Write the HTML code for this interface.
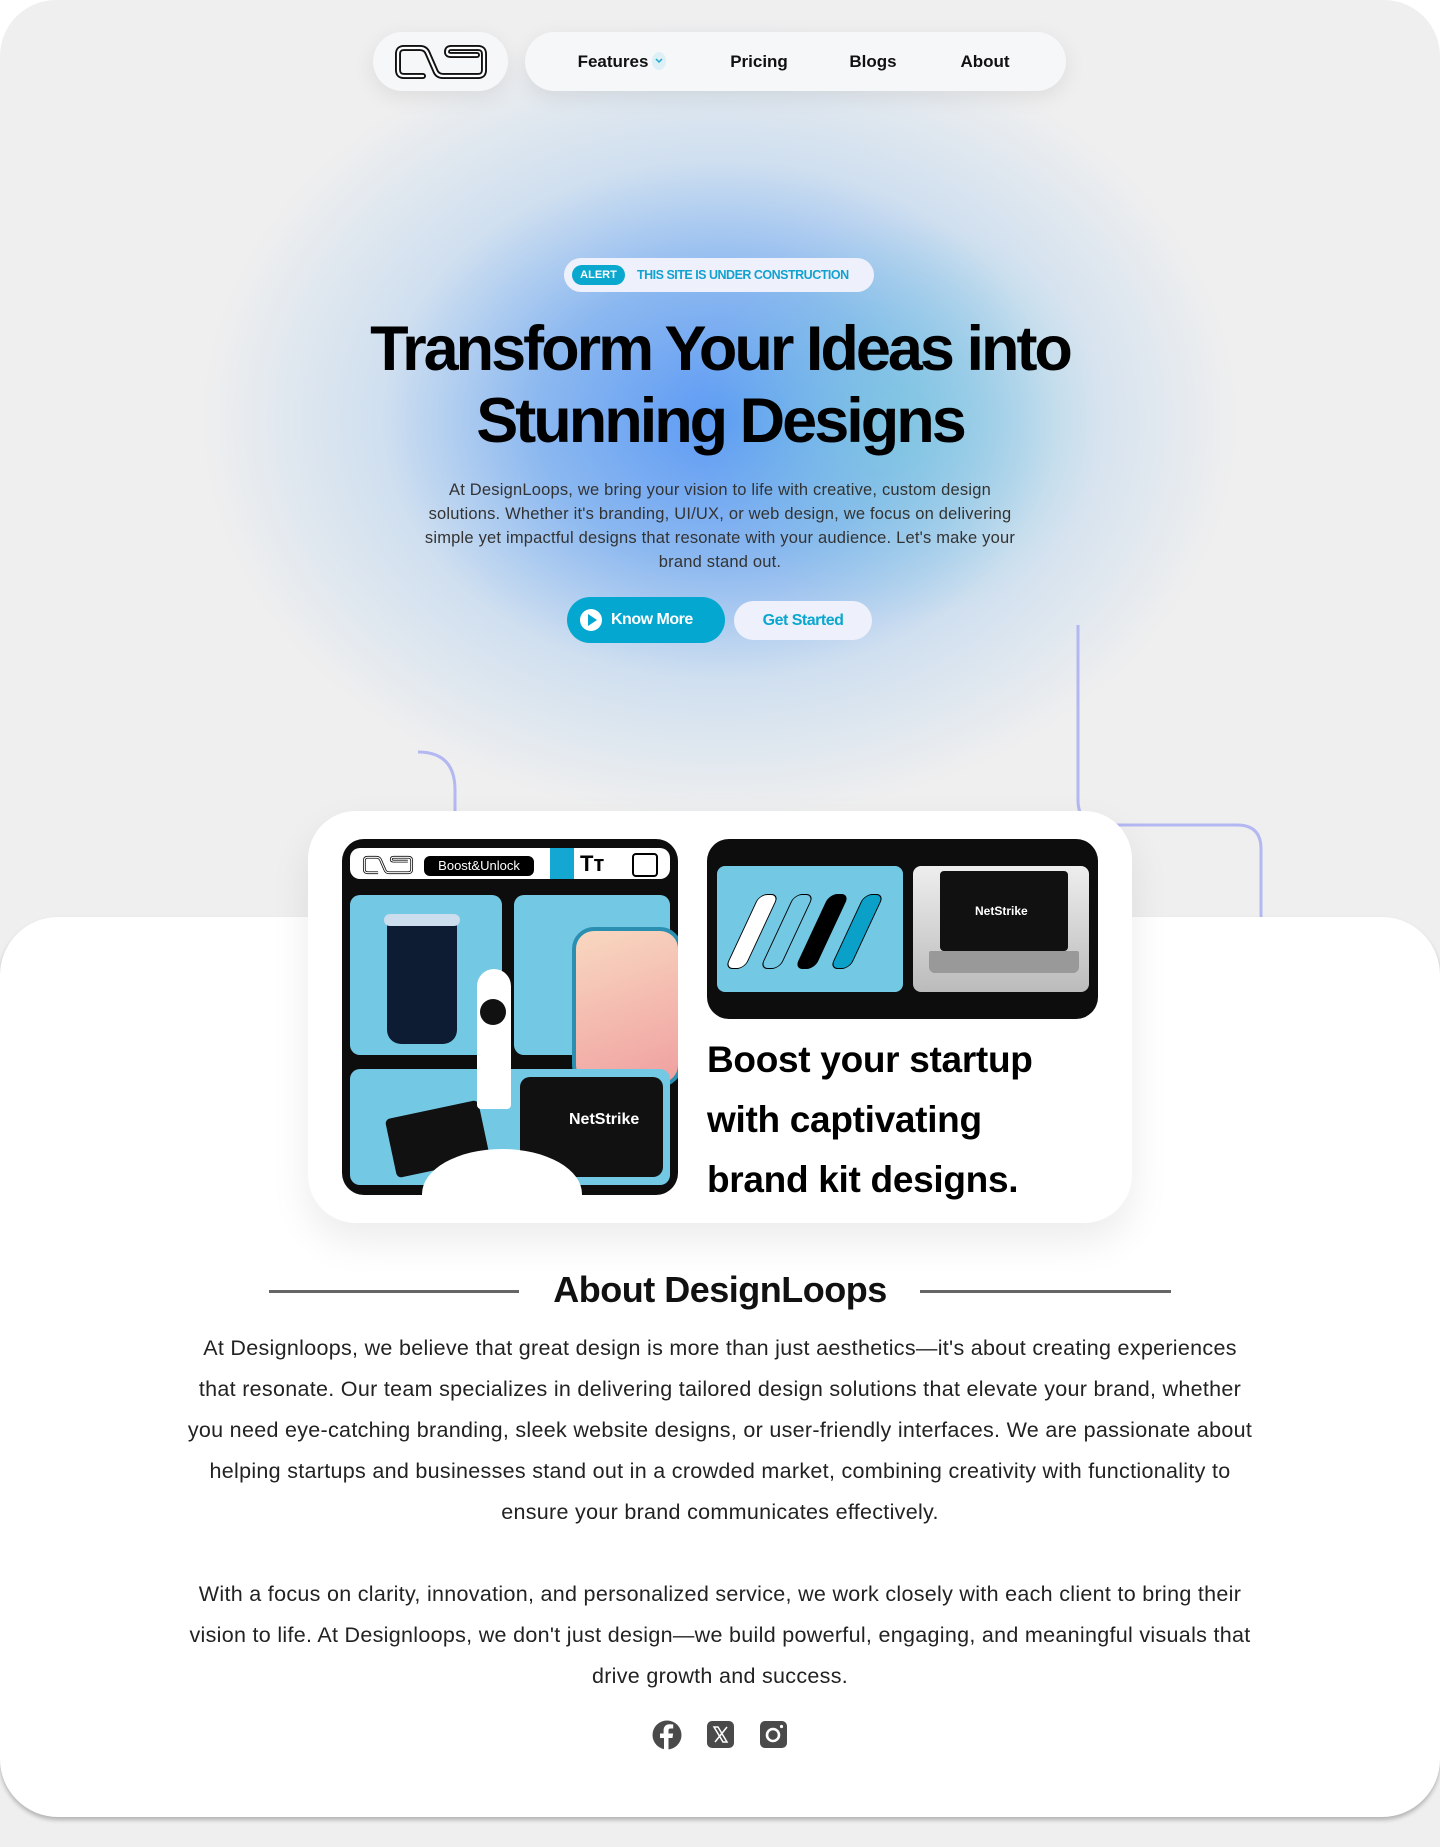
<!DOCTYPE html>
<html><head><meta charset="utf-8">
<style>
*{box-sizing:border-box;margin:0;padding:0}
html,body{width:1440px;height:1847px;overflow:hidden;background:#fff;font-family:"Liberation Sans",sans-serif}
.bgtop{position:absolute;left:0;top:0;width:1440px;height:1847px;background:#efefef;border-radius:56px 56px 0 0;overflow:hidden}
.glow{position:absolute;left:200px;top:20px;width:1040px;height:800px;
background:radial-gradient(closest-side,rgba(85,150,245,.95) 0%,rgba(105,165,240,.75) 35%,rgba(160,200,240,.4) 65%,rgba(239,239,239,0) 100%);}
.glow2{position:absolute;left:700px;top:220px;width:400px;height:400px;
background:radial-gradient(closest-side,rgba(120,210,215,.55) 0%,rgba(120,210,215,0) 100%)}
.white{position:absolute;left:0;top:917px;width:1440px;height:900px;background:#fff;border-radius:58px;box-shadow:0 3px 4px rgba(0,0,0,.25)}
.pill{position:absolute;background:#f6f7f9;border-radius:30px;box-shadow:0 6px 22px rgba(0,0,0,.08)}
.nav a{position:absolute;top:52px;font-size:17px;font-weight:bold;color:#111;text-decoration:none;transform:translateX(-50%)}
.h1{position:absolute;left:0;width:1440px;text-align:center;font-size:63px;font-weight:bold;letter-spacing:-3px;color:#000;line-height:72px}
.p{position:absolute;left:412px;width:616px;top:478px;text-align:center;font-size:16.5px;line-height:24px;color:#333;letter-spacing:.2px}
.btn{position:absolute;border-radius:24px;font-weight:bold;font-size:16px;letter-spacing:-.5px}
.card{position:absolute;left:308px;top:811px;width:824px;height:412px;background:#fff;border-radius:48px;box-shadow:0 18px 40px rgba(0,0,0,.08)}
.about p{position:absolute;left:185px;width:1070px;text-align:center;font-size:21.5px;line-height:41px;color:#222;letter-spacing:.3px}
</style></head><body>
<div class="bgtop">
 <div class="glow"></div><div class="glow2"></div>
 <svg width="1440" height="930" style="position:absolute;left:0;top:0" fill="none" stroke="#b3b8f2" stroke-width="3">
  <path d="M1078 625 V800 Q1078 825 1103 825 H1237 Q1261 825 1261 849 V917"/>
  <path d="M418 752 Q455 752 455 790 V812" />
 </svg>
</div>
<div class="white"></div>

<div class="pill" style="left:373px;top:32px;width:135px;height:59px"></div>
<svg style="position:absolute;left:393px;top:42px" width="96" height="40" viewBox="0 0 96 40" fill="none" stroke-linejoin="round" stroke-linecap="round">
 <g stroke="#111" stroke-width="6">
  <path d="M30 34 H11 Q5 34 5 28 V12 Q5 6 11 6 H27 Q33 6 35 12 L42 28 Q44 34 50 34 H85 Q91 34 91 28 V12 Q91 6 85 6 H58 Q54 6 54 10 Q54 13 58 13 H84"/>
 </g>
 <g stroke="#fff" stroke-width="2.2">
  <path d="M30 34 H11 Q5 34 5 28 V12 Q5 6 11 6 H27 Q33 6 35 12 L42 28 Q44 34 50 34 H85 Q91 34 91 28 V12 Q91 6 85 6 H58 Q54 6 54 10 Q54 13 58 13 H84"/>
 </g>
</svg>
<div class="pill nav" style="left:525px;top:32px;width:541px;height:59px"></div>
<div class="nav">
 <a style="left:613px">Features</a>
 <a style="left:759px">Pricing</a>
 <a style="left:873px">Blogs</a>
 <a style="left:985px">About</a>
</div>
<div style="position:absolute;left:652px;top:52px;width:14px;height:18px;border-radius:50%;background:#dcf0f6"></div>
<svg style="position:absolute;left:654px;top:57px" width="10" height="8" viewBox="0 0 10 8"><path d="M2 2 L5 5 L8 2" fill="none" stroke="#1ea7cf" stroke-width="1.5"/></svg>

<div style="position:absolute;left:564px;top:258px;width:310px;height:34px;border-radius:17px;background:#eef1fb"></div>
<div style="position:absolute;left:572px;top:265px;width:53px;height:20px;border-radius:10px;background:#0aa7cf;color:#fff;font-size:11px;font-weight:bold;text-align:center;line-height:20px">ALERT</div>
<div style="position:absolute;left:637px;top:268px;font-size:12.5px;font-weight:bold;color:#12a2d0;letter-spacing:-.5px">THIS SITE IS UNDER CONSTRUCTION</div>

<div class="h1" style="top:313px">Transform Your Ideas into</div>
<div class="h1" style="top:385px">Stunning Designs</div>
<div class="p">At DesignLoops, we bring your vision to life with creative, custom design solutions. Whether it's branding, UI/UX, or web design, we focus on delivering simple yet impactful designs that resonate with your audience. Let's make your brand stand out.</div>

<div class="btn" style="left:567px;top:597px;width:158px;height:46px;background:#03a7cf;color:#fff">
 <div style="position:absolute;left:13px;top:12px;width:22px;height:22px;border-radius:50%;background:#fff"></div>
 <div style="position:absolute;left:21px;top:17px;border-left:9px solid #03a7cf;border-top:6px solid transparent;border-bottom:6px solid transparent"></div>
 <span style="position:absolute;left:44px;top:14px">Know More</span></div>
<div class="btn" style="left:734px;top:601px;width:138px;height:39px;background:#eef1fb;color:#0aa7cf;text-align:center;line-height:39px">Get Started</div>

<div class="card"></div>
<div style="position:absolute;left:342px;top:839px;width:336px;height:356px;background:#0d0d0d;border-radius:22px;overflow:hidden">
 <div style="position:absolute;left:8px;top:9px;width:320px;height:31px;background:#fff;border-radius:10px"></div>
 <svg style="position:absolute;left:18px;top:15px" width="56" height="22" viewBox="0 0 96 40" fill="none"><path d="M30 34 H11 Q5 34 5 28 V12 Q5 6 11 6 H27 Q33 6 35 12 L42 28 Q44 34 50 34 H85 Q91 34 91 28 V12 Q91 6 85 6 H58 Q54 6 54 10 Q54 13 58 13 H84" stroke="#111" stroke-width="5"/><path d="M30 34 H11 Q5 34 5 28 V12 Q5 6 11 6 H27 Q33 6 35 12 L42 28 Q44 34 50 34 H85 Q91 34 91 28 V12 Q91 6 85 6 H58 Q54 6 54 10 Q54 13 58 13 H84" stroke="#fff" stroke-width="2"/></svg>
 <div style="position:absolute;left:82px;top:17px;width:110px;height:20px;background:#000;border-radius:6px;color:#fff;font-size:13px;text-align:center;line-height:20px">Boost&amp;Unlock</div>
 <div style="position:absolute;left:208px;top:9px;width:24px;height:31px;background:#14a7d2"></div>
 <div style="position:absolute;left:238px;top:12px;font-size:22px;font-weight:bold">Tт</div>
 <div style="position:absolute;left:290px;top:14px;width:26px;height:24px;border:2.5px solid #000;border-radius:4px"></div>
 <div style="position:absolute;left:8px;top:56px;width:152px;height:160px;background:#73c9e4;border-radius:10px"></div>
 <div style="position:absolute;left:45px;top:80px;width:70px;height:125px;background:#0d1b33;border-radius:8px 8px 14px 14px"></div>
 <div style="position:absolute;left:42px;top:75px;width:76px;height:12px;background:#cde;border-radius:6px"></div>
 <div style="position:absolute;left:172px;top:56px;width:156px;height:160px;background:#73c9e4;border-radius:10px"></div>
 <div style="position:absolute;left:230px;top:88px;width:110px;height:160px;background:linear-gradient(160deg,#f8d8c0,#f0a0a0);border-radius:22px;border:4px solid #2a8fb0"></div>
 <div style="position:absolute;left:8px;top:230px;width:320px;height:116px;background:#73c9e4;border-radius:10px"></div>
 <div style="position:absolute;left:178px;top:238px;width:143px;height:100px;background:#111;border-radius:10px"></div>
 <div style="position:absolute;left:227px;top:272px;color:#fff;font-size:16px;font-weight:bold">NetStrike</div>
 <div style="position:absolute;left:48px;top:270px;width:95px;height:60px;background:#111;border-radius:5px;transform:rotate(-12deg)"></div>
 <div style="position:absolute;left:135px;top:130px;width:34px;height:140px;background:#fff;border-radius:17px 17px 4px 4px"></div>
 <div style="position:absolute;left:138px;top:160px;width:26px;height:26px;background:#111;border-radius:50%"></div>
 <div style="position:absolute;left:80px;top:310px;width:160px;height:90px;background:#fff;border-radius:50%"></div>
</div>
<div style="position:absolute;left:707px;top:839px;width:391px;height:180px;background:#0d0d0d;border-radius:22px">
 <div style="position:absolute;left:10px;top:27px;width:186px;height:126px;background:#73c9e4;border-radius:8px"></div>
 <div style="position:absolute;left:35px;top:55px;width:20px;height:75px;background:#fff;border:1px solid #000;border-radius:8px;transform:skewX(-25deg)"></div>
 <div style="position:absolute;left:70px;top:55px;width:20px;height:75px;background:#73c9e4;border:1px solid #000;border-radius:8px;transform:skewX(-25deg)"></div>
 <div style="position:absolute;left:105px;top:55px;width:20px;height:75px;background:#000;border-radius:8px;transform:skewX(-25deg)"></div>
 <div style="position:absolute;left:140px;top:55px;width:20px;height:75px;background:#0aa0c8;border:1px solid #000;border-radius:8px;transform:skewX(-25deg)"></div>
 <div style="position:absolute;left:206px;top:27px;width:176px;height:126px;background:linear-gradient(#eee,#bbb);border-radius:8px"></div>
 <div style="position:absolute;left:233px;top:32px;width:128px;height:80px;background:#111;border-radius:4px"></div>
 <div style="position:absolute;left:222px;top:112px;width:150px;height:22px;background:#999;border-radius:2px 2px 6px 6px"></div>
 <div style="position:absolute;left:268px;top:65px;color:#fff;font-size:12px;font-weight:bold">NetStrike</div>
</div>
<div style="position:absolute;left:707px;top:1030px;font-size:37px;font-weight:bold;line-height:60px;color:#000;letter-spacing:-.3px">Boost your startup<br>with captivating<br>brand kit designs.</div>

<div style="position:absolute;left:269px;top:1290px;width:250px;height:3px;background:#666"></div>
<div style="position:absolute;left:920px;top:1290px;width:251px;height:3px;background:#666"></div>
<div style="position:absolute;left:0;width:1440px;top:1269px;text-align:center;font-size:36px;font-weight:bold;color:#111;letter-spacing:-.5px">About DesignLoops</div>
<div class="about">
<p style="top:1328px">At Designloops, we believe that great design is more than just aesthetics—it's about creating experiences that resonate. Our team specializes in delivering tailored design solutions that elevate your brand, whether you need eye-catching branding, sleek website designs, or user-friendly interfaces. We are passionate about helping startups and businesses stand out in a crowded market, combining creativity with functionality to ensure your brand communicates effectively.</p>
<p style="top:1574px">With a focus on clarity, innovation, and personalized service, we work closely with each client to bring their vision to life. At Designloops, we don't just design—we build powerful, engaging, and meaningful visuals that drive growth and success.</p>
</div>
<svg style="position:absolute;left:652px;top:1720px" width="30" height="30" viewBox="0 0 30 30"><circle cx="15" cy="15" r="14.5" fill="#4a4a4a"/><path d="M16.5 30V18h4l.6-4.5h-4.6v-2.8c0-1.3.4-2.2 2.2-2.2h2.5V4.5c-.4-.1-1.9-.2-3.6-.2-3.6 0-6 2.2-6 6.2v3H8v4.5h4v12z" fill="#fff"/></svg>
<svg style="position:absolute;left:707px;top:1721px" width="27" height="27" viewBox="0 0 27 27"><rect width="27" height="27" rx="5" fill="#4a4a4a"/><path d="M7 6h4l9 15h-4z" fill="none" stroke="#fff" stroke-width="1.5"/><path d="M20 6l-12 15" stroke="#fff" stroke-width="1.5"/></svg>
<svg style="position:absolute;left:760px;top:1721px" width="27" height="27" viewBox="0 0 27 27"><rect width="27" height="27" rx="5" fill="#4a4a4a"/><circle cx="13" cy="14" r="6" fill="none" stroke="#fff" stroke-width="2.6"/><circle cx="21.5" cy="5.5" r="1.6" fill="#fff"/></svg>
</body></html>
